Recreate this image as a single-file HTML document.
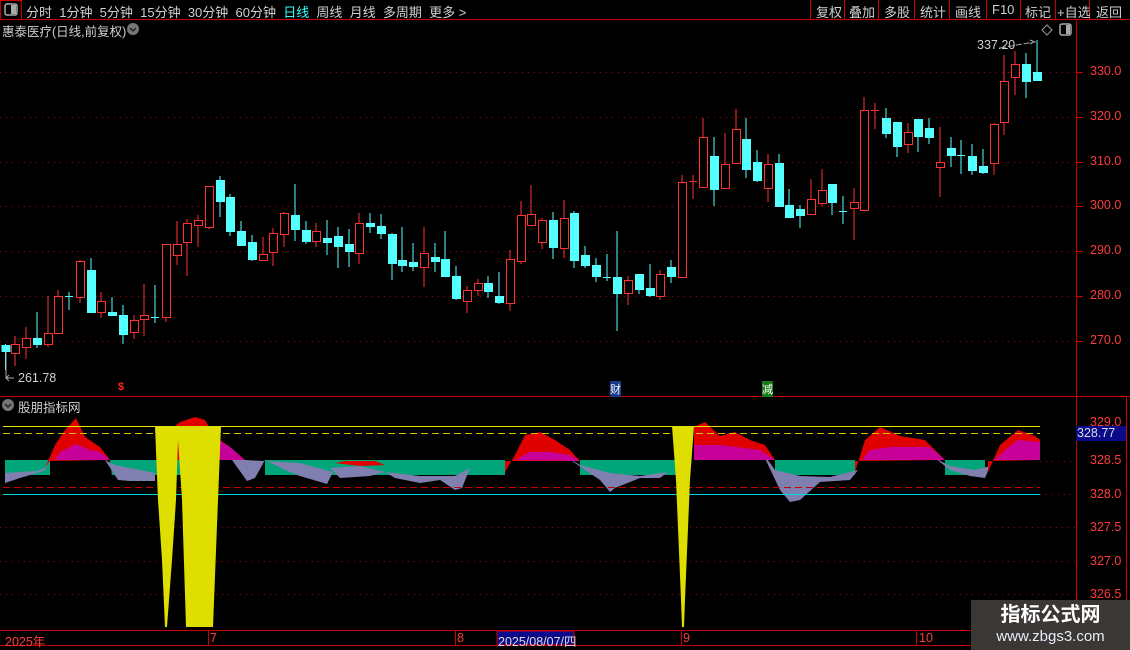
<!DOCTYPE html>
<html><head><meta charset="utf-8"><style>
*{margin:0;padding:0;box-sizing:border-box}
body{width:1130px;height:650px;background:#000;overflow:hidden;position:relative;font-family:"Liberation Sans","Noto Sans CJK SC",sans-serif;color:#d0d0d0;font-size:12.5px}
.a{position:absolute;white-space:nowrap}
.r{color:#ff3c3c}
</style></head><body>
<svg class="a" style="left:0;top:0" width="1130" height="650" id="s">
<line x1="0" y1="19.5" x2="1130" y2="19.5" stroke="#c00" />
<rect x="0.5" y="0.5" width="21" height="19" fill="none" stroke="#c00"/>
<rect x="5" y="4" width="12" height="11" rx="2" fill="none" stroke="#aaa" stroke-width="1.5"/>
<rect x="11" y="5" width="5" height="9" fill="#aaa"/>
<g stroke="#c00"><line x1="810.5" y1="0" x2="810.5" y2="19"/><line x1="844.5" y1="0" x2="844.5" y2="19"/><line x1="878.5" y1="0" x2="878.5" y2="19"/><line x1="914.5" y1="0" x2="914.5" y2="19"/><line x1="949.5" y1="0" x2="949.5" y2="19"/><line x1="986.5" y1="0" x2="986.5" y2="19"/><line x1="1020.5" y1="0" x2="1020.5" y2="19"/><line x1="1055.5" y1="0" x2="1055.5" y2="19"/><line x1="1089.5" y1="0" x2="1089.5" y2="19"/></g>
<circle cx="133" cy="29" r="6" fill="#777"/><path d="M130 28 L133 31 L136 28" stroke="#222" stroke-width="1.5" fill="none"/>
<path d="M1047 25 L1052 30 L1047 35 L1042 30 Z" fill="none" stroke="#999"/>
<rect x="1060" y="24" width="11" height="11" rx="2" fill="none" stroke="#aaa" stroke-width="1.5"/><rect x="1066" y="25" width="4" height="9" fill="#aaa"/>
<line x1="1076.5" y1="20" x2="1076.5" y2="645" stroke="#c00"/>
<line x1="1126.5" y1="397" x2="1126.5" y2="630" stroke="#c00"/>
<line x1="0" y1="396.5" x2="1130" y2="396.5" stroke="#c00"/>
<line x1="0" y1="630.5" x2="1130" y2="630.5" stroke="#c00"/>
<line x1="0" y1="645.5" x2="1130" y2="645.5" stroke="#c00"/>
<g id="grid" stroke="#a00" stroke-dasharray="1,5"></g>
<g id="c"></g>
<path d="M1000 48 L1034 42 M1030 40 L1035 42 L1030 44" stroke="#aaa" fill="none" stroke-dasharray="6,2"/>
<path d="M6 352 L6 378 L14 378 M9 375 L6 378 L9 381" stroke="#aaa" fill="none"/>
<circle cx="8" cy="405" r="6" fill="#777"/><path d="M5 404 L8 407 L11 404" stroke="#222" stroke-width="1.5" fill="none"/>
<g id="ig" stroke="#a00" stroke-dasharray="1,5"></g>
<rect x="5" y="460" width="1035" height="15" fill="#00a67a"/>
<polygon fill="#000" points="50,460 110,460 112,476 50,476"/>
<polygon fill="#000" points="215,460 265,460 265,476 215,476"/>
<polygon fill="#000" points="505,460 580,460 580,476 505,476"/>
<polygon fill="#000" points="690,460 775,460 775,476 690,476"/>
<polygon fill="#000" points="855,460 945,460 945,476 855,476"/>
<polygon fill="#000" points="985,460 1040,460 1040,476 985,476"/>
<g fill="#7f7fb0">
<polygon points="5,473 20,472 37,471 45,468 50,462 45,470 40,472 30,475 20,478 5,483"/>
<polygon points="105,460 115,465 150,472 155,473 155,481 130,481 118,480"/>
<polygon points="215,438 245,460 265,461 300,463 333,472 327,484 300,476 285,470 265,460 255,478 247,481 232,460"/>
<polygon points="330,468 360,466 385,472 420,476 455,476 470,468 462,488 455,490 440,480 420,483 395,478 385,472 370,476 340,478"/>
<polygon points="565,456 580,465 610,473 640,476 668,472 660,478 640,478 615,488 610,492 600,480 585,470"/>
<polygon points="762,452 775,470 800,476 830,477 858,470 850,480 820,482 800,500 790,502 780,490"/>
<polygon points="935,458 950,466 975,470 990,466 985,478 970,476 950,470"/>
</g>
<g fill="#e00000">
<polygon points="45,468 55,445 65,430 76,418 85,437 100,447 110,460 50,461"/>
<polygon points="170,430 180,422 195,417 205,420 212,432 220,440 230,447 245,460 170,460"/>
<polygon points="335,463 345,461 360,461 375,461 385,465 360,466"/>
<polygon points="505,472 515,455 525,435 540,432 555,440 570,450 580,461 505,461"/>
<polygon points="694,427 705,422 720,436 735,432 750,440 765,445 775,460 694,460"/>
<polygon points="855,472 865,440 880,427 900,436 925,440 945,460 855,461"/>
<polygon points="988,472 1000,445 1018,430 1035,436 1040,440 1040,460 988,461"/>
</g>
<g fill="#c8009a">
<polygon points="55,460 60,452 76,444 90,450 100,452 110,460"/>
<polygon points="200,436 215,438 230,447 245,460 200,460"/>
<polygon points="515,460 530,452 550,452 570,455 580,461"/>
<polygon points="694,445 720,445 760,450 775,460 694,460"/>
<polygon points="862,460 870,450 890,447 930,447 945,460"/>
<polygon points="995,460 1005,450 1018,440 1040,442 1040,460"/>
</g>
<line x1="3" y1="426.5" x2="1040" y2="426.5" stroke="#e8e800"/>
<line x1="3" y1="433.5" x2="1040" y2="433.5" stroke="#c8c800" stroke-dasharray="7,4"/>
<line x1="3" y1="487.5" x2="1040" y2="487.5" stroke="#c00" stroke-dasharray="7,4"/>
<line x1="3" y1="494.5" x2="1040" y2="494.5" stroke="#00d8e0"/>
<g fill="#dede00">
<polygon points="155,426 221,426 218,500 213,627 186,627 182,500 178,440 176,500 172,560 167,627 165,627 162,560 158,500"/>
<polygon points="672,426 694,426 690,480 685,600 684,627 682,627 681,600 676,480"/>
</g>
<g stroke="#c00"><line x1="208.5" y1="630" x2="208.5" y2="645"/><line x1="455.5" y1="630" x2="455.5" y2="645"/><line x1="681.5" y1="630" x2="681.5" y2="645"/><line x1="916.5" y1="630" x2="916.5" y2="645"/></g>
<rect x="497" y="631" width="77" height="14" fill="#0a0a8a" stroke="#c00"/>
</svg>

<div class="a" style="left:26px;top:2px;font-size:13px">分时&nbsp; 1分钟&nbsp; 5分钟&nbsp; 15分钟&nbsp; 30分钟&nbsp; 60分钟&nbsp; <span style="color:#3ff">日线</span>&nbsp; 周线&nbsp; 月线&nbsp; 多周期&nbsp; 更多 &gt;</div>
<div class="a" style="left:816px;top:2px;font-size:13px">复权</div><div class="a" style="left:849px;top:2px;font-size:13px">叠加</div><div class="a" style="left:884px;top:2px;font-size:13px">多股</div><div class="a" style="left:920px;top:2px;font-size:13px">统计</div><div class="a" style="left:955px;top:2px;font-size:13px">画线</div><div class="a" style="left:992px;top:2px;font-size:13px">F10</div><div class="a" style="left:1025px;top:2px;font-size:13px">标记</div><div class="a" style="left:1057px;top:2px;font-size:13px">+自选</div><div class="a" style="left:1096px;top:2px;font-size:13px">返回</div>
<div class="a" style="left:2px;top:21px">惠泰医疗(日线,前复权)</div>
<div class="a" style="left:977px;top:38px">337.20</div>
<div class="a" style="left:18px;top:371px">261.78</div>
<div class="a" style="left:118px;top:381px;color:#f22;font-size:11px;font-weight:bold">$</div>
<div class="a" style="left:610px;top:381px;color:#fff;background:#1a3a8a;font-size:11px">财</div>
<div class="a" style="left:762px;top:381px;color:#fff;background:#187a18;font-size:11px">减</div>
<div class="a" style="left:18px;top:397px">股朋指标网</div>
<div class="a r" style="left:1090px;top:64px">330.0</div>
<div class="a r" style="left:1090px;top:109px">320.0</div>
<div class="a r" style="left:1090px;top:154px">310.0</div>
<div class="a r" style="left:1090px;top:198px">300.0</div>
<div class="a r" style="left:1090px;top:243px">290.0</div>
<div class="a r" style="left:1090px;top:288px">280.0</div>
<div class="a r" style="left:1090px;top:333px">270.0</div>
<div class="a r" style="left:1090px;top:415px">329.0</div>
<div class="a" style="left:1076px;top:426px;width:50px;height:15px;background:#0a0a8a;color:#ddd;padding-left:1px">328.77</div>
<div class="a r" style="left:1090px;top:453px">328.5</div>
<div class="a r" style="left:1090px;top:487px">328.0</div>
<div class="a r" style="left:1090px;top:520px">327.5</div>
<div class="a r" style="left:1090px;top:554px">327.0</div>
<div class="a r" style="left:1090px;top:587px">326.5</div>
<div class="a r" style="left:5px;top:631px">2025年</div>
<div class="a r" style="left:210px;top:631px">7</div>
<div class="a r" style="left:457px;top:631px">8</div>
<div class="a" style="left:498px;top:631px;color:#ddd">2025/08/07/四</div>
<div class="a r" style="left:683px;top:631px">9</div>
<div class="a r" style="left:919px;top:631px">10</div>
<div class="a" style="left:971px;top:600px;width:159px;height:50px;background:#3b3735;color:#fff;text-align:center">
<div style="font-size:20px;font-weight:bold;line-height:26px;margin-top:2px">指标公式网</div>
<div style="font-size:15px;line-height:18px;color:#e8eef8">www.zbgs3.com</div></div>

<script>
var D=[[5.5,345,351,344,370,0],[15,344,353,336,366,1],[26,338,347,327,359,1],[37,338,344,312,348,0],[48,333,344,296,347,1],[58,296,333,290,334,1],[69,296,296,292,310,0],[80,261,297,260,303,1],[91,270,312,258,313,0],[101,301,312,292,318,1],[112,312,315,297,316,0],[123,315,334,305,344,0],[134,320,332,315,339,1],[144,315,319,284,336,1],[155,317,317,285,323,0],[166,244,317,244,322,1],[177,244,255,221,265,1],[187,223,242,219,276,1],[198,220,225,215,247,1],[209,186,227,186,229,1],[220,180,201,176,217,0],[230,197,231,194,236,0],[241,231,245,221,246,0],[252,242,259,235,261,0],[263,254,260,237,260,1],[273,233,252,228,266,1],[284,213,234,212,247,1],[295,215,229,184,241,0],[306,230,241,221,244,0],[316,231,241,223,247,1],[327,238,242,220,255,0],[338,236,246,227,268,0],[349,244,251,229,267,0],[359,223,253,213,264,1],[370,223,226,213,233,0],[381,226,233,214,239,0],[392,234,263,233,280,0],[402,260,265,227,272,0],[413,262,266,243,271,0],[424,253,267,227,287,1],[435,257,261,243,272,0],[445,259,276,231,277,0],[456,276,298,266,300,0],[467,290,301,286,313,1],[478,283,290,279,296,1],[488,283,291,276,298,0],[499,296,302,272,304,0],[510,259,303,250,311,1],[521,215,261,201,264,1],[531,214,225,185,225,1],[542,220,242,218,249,1],[553,220,247,212,259,0],[564,218,248,200,258,1],[574,213,260,211,268,0],[585,255,265,246,268,0],[596,265,276,258,282,0],[607,277,277,254,281,0],[617,277,293,231,331,0],[628,280,293,276,305,1],[639,274,289,274,294,0],[650,288,295,264,297,0],[660,274,296,270,300,1],[671,267,276,260,283,0],[682,182,277,175,277,1],[693,181,181,175,199,1],[703,137,187,118,187,1],[714,156,189,137,206,0],[725,164,188,133,188,1],[736,129,163,109,163,1],[746,139,169,118,178,0],[757,162,180,150,182,0],[768,164,188,154,202,1],[779,163,206,154,206,0],[789,205,217,189,218,0],[800,209,215,205,228,0],[811,199,214,179,214,1],[822,190,203,169,206,1],[832,184,202,184,215,0],[843,211,211,196,224,0],[854,202,208,188,240,1],[864,110,210,97,210,1],[875,110,110,103,129,1],[886,118,133,108,138,0],[897,122,146,122,157,0],[908,132,144,123,153,1],[918,119,136,119,152,0],[929,128,137,118,144,0],[940,162,167,127,197,1],[951,148,155,137,167,0],[961,155,155,140,174,0],[972,156,170,144,175,0],[983,166,172,149,174,0],[994,124,163,123,175,1],[1004,81,122,55,135,1],[1015,64,77,51,95,1],[1026,64,81,53,98,0],[1037,72,80,40,80,0]];
var s='';
D.forEach(function(d){var x=d[0],col=d[5]?'#ff3232':'#54ffff';
s+='<line x1="'+x+'" y1="'+d[3]+'" x2="'+x+'" y2="'+d[4]+'" stroke="'+col+'"/>';
var h=d[2]-d[1];
if(h<1){s+='<line x1="'+(x-4)+'" y1="'+(d[1]+.5)+'" x2="'+(x+4)+'" y2="'+(d[1]+.5)+'" stroke="'+col+'"/>';}
else if(d[5]){s+='<rect x="'+(x-3.5)+'" y="'+(d[1]+.5)+'" width="8" height="'+h+'" fill="#000" stroke="'+col+'"/>';}
else{s+='<rect x="'+(x-4)+'" y="'+d[1]+'" width="9" height="'+(h+1)+'" fill="'+col+'"/>';}
});
document.getElementById('c').innerHTML=s;
var g='';[72,117,162,206,251,296,341].forEach(function(y){g+='<line x1="0" y1="'+(y+.5)+'" x2="1076" y2="'+(y+.5)+'"/><line x1="1076" y1="'+(y+.5)+'" x2="1083" y2="'+(y+.5)+'" stroke-dasharray="none" stroke="#c00"/>';});
document.getElementById('grid').innerHTML=g;
var h='';[527,561,594].forEach(function(y){h+='<line x1="0" y1="'+(y+.5)+'" x2="1076" y2="'+(y+.5)+'"/>';});
[461,494].forEach(function(y){h+='<line x1="1040" y1="'+(y+.5)+'" x2="1076" y2="'+(y+.5)+'"/>';});
document.getElementById('ig').innerHTML=h;
</script>
</body></html>
